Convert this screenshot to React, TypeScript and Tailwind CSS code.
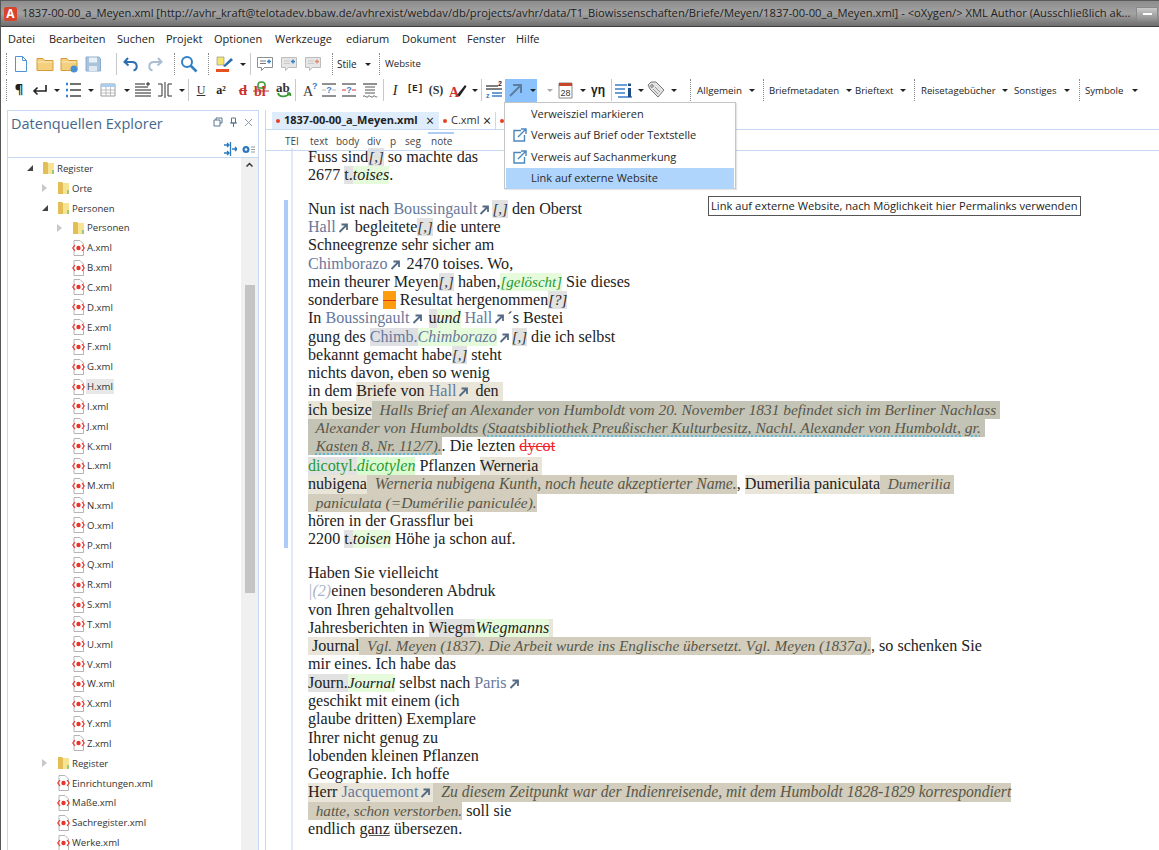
import React from "react";

const Grip = () => <div className="w-px h-[22px] shrink-0 border-l border-dotted border-[#8a8a8a]" />;
const Sep = () => <div className="w-px h-[22px] shrink-0 bg-[#c9c9c9]" />;
const Drop = () => (
  <div className="w-[9px] shrink-0 flex justify-center">
    <div className="w-0 h-0 border-x-[3px] border-x-transparent border-t-[3px] border-t-[#222]" />
  </div>
);

const Cell = ({ children, className }: { children: React.ReactNode; className?: string }) => (
  <div className={`w-6 h-6 flex items-center justify-center shrink-0 whitespace-nowrap ${className || ""}`}>{children}</div>
);

const Svg = ({ children }: { children: React.ReactNode }) => (
  <svg width="18" height="18" viewBox="0 0 18 18" fill="none">
    {children}
  </svg>
);

const NewDoc = () => (
  <Svg>
    <path d="M3.5 1.5h7l4 4v11h-11z" fill="#fff" stroke="#4f93d2" />
    <path d="M10.5 1.5v4h4" stroke="#4f93d2" />
  </Svg>
);
const FolderIcon = ({ net }: { net?: boolean }) => (
  <Svg>
    <path d="M1 3.5h6l1.5 2H17v10H1z" fill="#f3cf7e" stroke="#d79c38" />
    <path d="M1.5 7h15" stroke="#fbe9bd" />
    {net && <circle cx="14" cy="14" r="3.5" fill="#4a8fd0" />}
  </Svg>
);
const SaveIcon = () => (
  <Svg>
    <path d="M2 2h13l1.500 1.500V16H2z" fill="#a9c3dd" stroke="#8badce" />
    <path d="M5 2.500h8v5H5z" fill="#e9f0f7" />
    <path d="M5 11h8v5H5z" fill="#dfe8f1" />
  </Svg>
);
const Undo = ({ off }: { off?: boolean }) => (
  <Svg>
    <path d="M6 3 2.500 7 6.500 10.500M3 7h7c6 0 6 7.500 1.500 8.500" stroke={off ? "#a9bed3" : "#2f6fb0"} strokeWidth="2" />
  </Svg>
);
const Redo = () => (
  <div className="-scale-x-100">
    <Undo off />
  </div>
);
const Search = () => (
  <Svg>
    <circle cx="7" cy="7" r="5" stroke="#2f80c4" strokeWidth="2" />
    <path d="m10.500 10.500 6 6" stroke="#2f80c4" strokeWidth="2.600" />
  </Svg>
);
const Highlight = () => (
  <Svg>
    <path d="M1 2h7v8H1z" fill="#f5e56b" stroke="#888" strokeWidth=".6" />
    <path d="m7 11 8-8 2 2-8 7z" fill="#2c6db0" />
    <path d="M0 14h13v3H0z" fill="#e8501f" />
  </Svg>
);
const Comment = ({ off, mark }: { off?: boolean; mark?: string }) => (
  <Svg>
    <path d="M1.500 2.500h15v10h-8l-3 3v-3h-4z" fill={off ? "#e6e6e6" : "#fff"} stroke={off ? "#bdbdbd" : "#8a8f94"} />
    <path d="M4 6h6M4 8.500h6" stroke={off ? "#c8c8c8" : "#777"} />
    <path d="M11 6.500h4M13 4.500v4" stroke={mark || "#2f80c4"} strokeWidth="1.400" />
  </Svg>
);
const Lines = ({ color = "#444", dots }: { color?: string; dots?: boolean }) => (
  <Svg>
    {dots && <path d="M2 3h2M2 9h2M2 15h2" stroke="#2f80e0" strokeWidth="2.500" />}
    <path d="M6 3h11M6 9h11M6 15h11" stroke={color} strokeWidth="1.400" />
  </Svg>
);
const Enter = () => (
  <Svg>
    <path d="M15 4v6H3M6.500 6.500 3 10l3.500 3.500" stroke="#222" strokeWidth="1.600" />
  </Svg>
);
const TableIcon = () => (
  <Svg>
    <path d="M2 3h14v12H2z" fill="#fff" stroke="#9a9a9a" />
    <path d="M2 3h14v3H2z" fill="#a8cdf0" />
    <path d="M2 9h14M2 12h14M7 6v9M11.500 6v9" stroke="#bbb" />
  </Svg>
);
const AlignIcon = () => (
  <Svg>
    <path d="M1 3h10M1 6h13M1 9h16M1 12h16M1 15h16" stroke="#222" />
    <path d="M14 1v4M12 3h4" stroke="#222" />
  </Svg>
);
const SplitIcon = () => (
  <Svg>
    <path d="M2 3h4v12H2M16 3h-4v12h4M9 1v16" stroke="#333" />
  </Svg>
);
const Rule = ({ red, wavy }: { red?: boolean; wavy?: boolean }) => (
  <Svg>
    <path d="M2 3h14" stroke="#222" />
    {!wavy && <path d="M2 9h4M12 9h4" stroke={red ? "#d33" : "#bbb"} />}
    {wavy ? (
      <path d="M4 6h10M4 9h10M4 12h10M2 15.500c2-2 3 2 5 0s3 2 5 0 3 2 4 0" stroke="#555" />
    ) : (
      <path d="M2 15h14" stroke="#222" />
    )}
    {!wavy && <text x="9" y="12" fontSize="9" textAnchor="middle" fontWeight="bold" fill="#3f7fc0" fontFamily="Liberation Sans">?</text>}
  </Svg>
);
const Spark = () => (
  <Svg>
    <text x="2" y="15" fontSize="14" fill="#333" fontFamily="Liberation Serif">A</text>
    <text x="11" y="8" fontSize="9" fontWeight="bold" fill="#3f7fc0" fontFamily="Liberation Sans">?</text>
  </Svg>
);
const AbIcon = () => (
  <Svg>
    <text x="1" y="11" fontSize="13" fontWeight="bold" fill="#333" fontFamily="Liberation Serif">ab</text>
    <path d="M3 12c1 4 8 5 12 0M15 12l.5 3M15 12l-3 .5" stroke="#3c9a35" strokeWidth="1.800" />
  </Svg>
);
const BlIcon = () => (
  <Svg>
    <path d="M5 4c0-4 7-4 7 0v3H5z" stroke="#3c9a35" strokeWidth="1.600" />
    <text x="1" y="15" fontSize="14" fontWeight="bold" fill="#c8332c" fontFamily="Liberation Serif">bl</text>
    <path d="M0 10h16" stroke="#c8332c" />
  </Svg>
);
const Pen = () => (
  <Svg>
    <text x="0" y="16" fontSize="14" fontWeight="bold" fill="#d0322a" fontFamily="Liberation Serif">A</text>
    <path d="m8 14 8-10 1.500 1.500-7 10z" fill="#222" />
  </Svg>
);
const NumList = () => (
  <Svg>
    <path d="M1 5h12M1 8h16" stroke="#555" strokeWidth="1.400" />
    <path d="M7 12h10M7 15h10" stroke="#3a7fc8" strokeWidth="1.400" />
    <text x="13" y="5" fontSize="7" fontWeight="bold" fill="#222" fontFamily="Liberation Sans">2</text>
    <text x="1" y="17" fontSize="7" fontWeight="bold" fill="#3a7fc8" fontFamily="Liberation Sans">z</text>
  </Svg>
);
const ArrowLink = () => (
  <Svg>
    <path d="m3 15 10-10M6 4h8v8" stroke="#5d7f9f" strokeWidth="2" />
  </Svg>
);
const Calendar = () => (
  <Svg>
    <path d="M2 2h13v15H2z" fill="#fff" stroke="#888" />
    <path d="M2 2h13v3H2z" fill="#c8472b" />
    <text x="8.500" y="15" fontSize="9" textAnchor="middle" fill="#333" fontFamily="Liberation Sans">28</text>
  </Svg>
);
const InfoLines = () => (
  <Svg>
    <path d="M0 4h12M0 8h10M0 12h10M3 16h14" stroke="#3a7fc8" strokeWidth="1.600" />
    <path d="M13 7h3v9h-3z" fill="#1d4f86" />
    <path d="M13 2.500h3V5h-3z" fill="#1d4f86" />
  </Svg>
);
const TagIcon = () => (
  <Svg>
    <path d="m1 4 3-3h5l8 8-6 7-8-8z" fill="#e3e3e3" stroke="#777" />
    <circle cx="5" cy="5" r="1.300" stroke="#777" />
    <path d="m6 8 5 5M8 6l5 5" stroke="#999" />
  </Svg>
);

const TopBar = () => (
  <div className="h-[27px] flex items-center bg-gradient-to-b from-[#8d8d8d] via-[#a3a3a3] to-[#6e6e6e] border-t border-t-[#5a5a5a] border-b border-b-[#3e3e3e]">
    <div className="ml-[3px] w-[13px] h-[14px] shrink-0 bg-[#d8432c] rounded-[2px] text-white text-[12px] font-bold leading-[14px] text-center">A</div>
    <div className="ml-[5px] flex-1 min-w-0 whitespace-nowrap overflow-hidden text-[11.2px] text-[#1d1d1d]">
      1837-00-00_a_Meyen.xml [http://avhr_kraft@telotadev.bbaw.de/avhrexist/webdav/db/projects/avhr/data/T1_Biowissenschaften/Briefe/Meyen/1837-00-00_a_Meyen.xml] - &lt;oXygen/&gt; XML Author (Ausschließlich ak...
    </div>
    <div className="ml-[6px] mr-[1px] w-[22px] h-[14px] shrink-0 border border-[#8a8a8a] bg-gradient-to-b from-[#c9c9c9] to-[#8f8f8f] flex items-center justify-center rounded-b-[2px]">
      <div className="w-[9px] h-[2px] bg-white" />
    </div>
  </div>
);

const menuItems: [string, string][] = [
  ["Datei", "w-[41px]"],
  ["Bearbeiten", "w-[68px]"],
  ["Suchen", "w-[49px]"],
  ["Projekt", "w-[48px]"],
  ["Optionen", "w-[61px]"],
  ["Werkzeuge", "w-[71px]"],
  ["ediarum", "w-[56px]"],
  ["Dokument", "w-[65px]"],
  ["Fenster", "w-[49px]"],
  ["Hilfe", "w-[40px]"],
];

const MenuBar = () => (
  <div className="h-[24px] pl-[7px] flex items-center text-[11px] text-[#222]">
    {menuItems.map(([label, w]) => (
      <div key={label} className={w}>
        {label}
      </div>
    ))}
  </div>
);

const ToolbarOne = () => (
  <div className="h-[26px] pl-[5px] flex items-center">
    <Grip />
    <div className="w-[2px]" />
    <Cell><NewDoc /></Cell>
    <Cell><FolderIcon /></Cell>
    <Cell><FolderIcon net /></Cell>
    <Cell><SaveIcon /></Cell>
    <div className="w-[11px]" />
    <Sep />
    <div className="w-[2px]" />
    <Cell><Undo /></Cell>
    <Cell><Redo /></Cell>
    <div className="w-[7px]" />
    <Grip />
    <div className="w-[2px]" />
    <Cell><Search /></Cell>
    <div className="w-[7px]" />
    <Grip />
    <div className="w-[4px]" />
    <Cell><Highlight /></Cell>
    <div className="w-px" />
    <Drop />
    <div className="w-[3px]" />
    <Sep />
    <div className="w-[2px]" />
    <Cell><Comment /></Cell>
    <Cell><Comment off /></Cell>
    <Cell><Comment off mark="#e08a70" /></Cell>
    <div className="w-[7px]" />
    <Grip />
    <div className="w-[4px]" />
    <div className="w-[26px] text-[10px] text-[#222]">Stile</div>
    <Drop />
    <div className="w-[7px]" />
    <Grip />
    <div className="w-[5px]" />
    <div className="text-[9.6px] text-[#222]">Website</div>
  </div>
);

const ToolbarTwo = () => (
  <div className="h-[26px] pl-[5px] flex items-center">
    <Grip />
    <Cell className="text-[13px] font-bold text-[#222]">¶</Cell>
    <Cell className="-ml-[3px]"><Enter /></Cell>
    <Drop />
    <Cell><Lines dots /></Cell>
    <div className="w-px" />
    <Drop />
    <div className="w-px" />
    <Cell><TableIcon /></Cell>
    <div className="w-[2px]" />
    <Drop />
    <Cell><AlignIcon /></Cell>
    <Cell className="-ml-[2px]"><SplitIcon /></Cell>
    <Drop />
    <div className="w-[2px]" />
    <Sep />
    <Cell className="font-['Liberation_Serif',serif] text-[12px] underline text-[#333]">U</Cell>
    <Cell className="-ml-[4px] font-['Liberation_Serif',serif] text-[12px] font-bold text-[#222]">a²</Cell>
    <Cell className="-ml-[2px] font-['Liberation_Serif',serif] text-[15px] font-bold text-[#c8332c] line-through">d</Cell>
    <Cell className="-ml-[5px]"><BlIcon /></Cell>
    <Cell className="-ml-[2px]"><AbIcon /></Cell>
    <div className="-ml-px"><Sep /></div>
    <div className="w-[2px]" />
    <Cell><Spark /></Cell>
    <Cell className="-ml-[5px]"><Rule /></Cell>
    <Cell className="-ml-[4px]"><Rule red /></Cell>
    <Cell className="-ml-[3px]"><Rule wavy /></Cell>
    <div className="w-px" />
    <Sep />
    <Cell className="-ml-px font-['Liberation_Serif',serif] italic text-[14px] text-[#222]">I</Cell>
    <Cell className="-ml-[4px] font-['Liberation_Mono',monospace] text-[9px] font-bold text-[#222]">[E]</Cell>
    <Cell className="-ml-[3px] font-['Liberation_Serif',serif] text-[12px] font-bold text-[#333]">(S)</Cell>
    <Cell className="-ml-[2px]"><Pen /></Cell>
    <Drop />
    <div className="w-[2px]" />
    <Sep />
    <Cell><NumList /></Cell>
    <div className="-ml-px w-[32px] h-[23px] shrink-0 flex items-center bg-[#8cc2fb]">
      <Cell className="-ml-[1px]"><ArrowLink /></Cell>
      <Drop />
    </div>
    <div className="w-[10px]" />
    <div className="w-0 h-0 border-x-[3px] border-x-transparent border-t-[3px] border-t-[#aaa]" />
    <div className="w-px" />
    <Cell><Calendar /></Cell>
    <Drop />
    <Cell className="-ml-px font-['Liberation_Sans',sans-serif] text-[12px] font-bold text-[#222]">γη</Cell>
    <div className="w-px" />
    <Sep />
    <Cell><InfoLines /></Cell>
    <Drop />
    <Cell className="-ml-px"><TagIcon /></Cell>
    <div className="w-px" />
    <Drop />
    <div className="w-[12px]" />
    <Grip />
    <div className="w-[6px]" />
    <div className="w-[50px] mt-[2px] text-[9.8px] text-[#222]">Allgemein</div>
    <Drop />
    <div className="w-[7px]" />
    <Grip />
    <div className="w-[5px]" />
    <div className="w-[75px] mt-[2px] text-[9.6px] text-[#222] whitespace-nowrap">Briefmetadaten</div>
    <Drop />
    <div className="w-[2px]" />
    <div className="w-[43px] mt-[2px] text-[9.6px] text-[#222]">Brieftext</div>
    <Drop />
    <div className="w-[7px]" />
    <Grip />
    <div className="w-[6px]" />
    <div className="w-[79px] mt-[2px] text-[9.6px] text-[#222] whitespace-nowrap">Reisetagebücher</div>
    <Drop />
    <div className="w-[5px]" />
    <div className="w-[48px] mt-[2px] text-[9.6px] text-[#222]">Sonstiges</div>
    <Drop />
    <div className="w-[8px]" />
    <Grip />
    <div className="w-[5px]" />
    <div className="w-[45px] mt-[2px] text-[9.6px] text-[#222]">Symbole</div>
    <Drop />
  </div>
);

const TreeFolder = () => (
  <svg width="13" height="14" viewBox="0 0 13 14" className="shrink-0">
    <path d="M1 1h4l1 1v11H1z" fill="#e3bd55" />
    <path d="M6 2h6v11H6z" fill="#f6e393" />
    <path d="M10 9h2v4h-2z" fill="#9cc97f" />
  </svg>
);
const XmlFile = () => (
  <svg width="13" height="16" viewBox="0 0 13 16" className="shrink-0">
    <path d="M2 .5h6l3.500 3.500v11.500H2z" fill="#fff" stroke="#b5b5b5" />
    <path d="M3 5 .8 8 3 11M10 5l2.200 3L10 11" stroke="#e8342b" fill="none" strokeWidth="1.200" />
    <circle cx="6.500" cy="8" r="2.200" fill="#e8342b" />
  </svg>
);
const Open = () => <div className="w-0 h-0 border-l-[6px] border-l-transparent border-b-[6px] border-b-[#444]" />;
const Closed = () => <div className="w-0 h-0 border-y-[4px] border-y-transparent border-l-[5px] border-l-[#c8c8c8]" />;

type Row = { label: string; depth: "a" | "b" | "c"; kind: "open" | "closed" | "file"; selected?: boolean };

const letters = "ABCDEFGHIJKLMNOPQRSTUVWXYZ".split("");
const rows: Row[] = [
  { label: "Register", depth: "a", kind: "open" },
  { label: "Orte", depth: "b", kind: "closed" },
  { label: "Personen", depth: "b", kind: "open" },
  { label: "Personen", depth: "c", kind: "closed" },
  ...letters.map((l): Row => ({ label: `${l}.xml`, depth: "c", kind: "file", selected: l === "H" })),
  { label: "Register", depth: "b", kind: "closed" },
  { label: "Einrichtungen.xml", depth: "b", kind: "file" },
  { label: "Maße.xml", depth: "b", kind: "file" },
  { label: "Sachregister.xml", depth: "b", kind: "file" },
  { label: "Werke.xml", depth: "b", kind: "file" },
];
const depthClass = { a: "pl-[19px]", b: "pl-[34px]", c: "pl-[49px]" };

const Explorer = () => (
  <div className="w-[252px] ml-[6px] shrink-0 h-full border border-[#c5daf0] flex flex-col overflow-hidden">
    <div className="h-[47px] shrink-0 border-b border-[#c5daf0] relative">
      <div className="pl-[3px] pt-[1px] text-[14.5px] leading-[24px] text-[#44688d]">Datenquellen Explorer</div>
      <div className="absolute right-[5px] top-[6px] flex gap-[6px] items-center">
        <svg width="10" height="10" viewBox="0 0 10 10" fill="none" stroke="#5b7590"><path d="M3 3V1h6v5H7M1 3h6v6H1z" /></svg>
        <svg width="9" height="10" viewBox="0 0 9 10" fill="none" stroke="#5b7590"><path d="M2.500 1h4v5h-4zM1 6h7M4.500 6v4" /></svg>
        <svg width="9" height="9" viewBox="0 0 9 9" stroke="#8a9aaa"><path d="m1 1 7 7M8 1 1 8" /></svg>
      </div>
      <div className="absolute right-[3px] top-[31px] flex gap-[5px] items-center">
        <svg width="13" height="14" viewBox="0 0 13 14" fill="none" stroke="#2d79bd" strokeWidth="1.300"><path d="M0 3h5M3 1l2 2-2 2M8 7h5M11 5l2 2-2 2M0 11h5M3 9l2 2-2 2M6.500 0v14" /></svg>
        <svg width="13" height="9" viewBox="0 0 13 9"><circle cx="4" cy="4.500" r="3.500" fill="#2d79bd" /><circle cx="4" cy="4.500" r="1.200" fill="#fff" /><path d="M9 2h4M9 4.500h4M9 7h4" stroke="#999" /></svg>
      </div>
    </div>
    <div className="flex-1 flex min-h-0">
      <div className="flex-1 min-w-0 pt-[0.5px]">
        {rows.map((r, i) => (
          <div key={i} className={`h-[19.84px] flex items-center text-[9.6px] text-[#333] ${depthClass[r.depth]}`}>
            <div className="w-[15px] flex items-center">
              {r.kind === "open" && <Open />}
              {r.kind === "closed" && <Closed />}
            </div>
            {r.kind === "file" ? <XmlFile /> : <TreeFolder />}
            <div className={`ml-[1px] px-[1px] leading-[15px] whitespace-nowrap ${r.selected ? "bg-[#e8e8e8]" : ""}`}>{r.label}</div>
          </div>
        ))}
      </div>
      <div className="w-[17px] shrink-0 bg-[#f0f0f0] flex flex-col items-center pt-[4px]">
        <svg width="7" height="5" viewBox="0 0 7 5" fill="none" stroke="#333" strokeWidth="1.500"><path d="m.5 4.500 3-3 3 3" /></svg>
        <div className="mt-[118px] w-[10px] h-[308px] bg-[#c4c4c4]" />
      </div>
    </div>
  </div>
);

const Tabs = () => (
  <div className="h-[20px] shrink-0 pt-[2px] flex items-stretch pl-[6px] border-b border-[#c5daf0]">
    <div className="w-[167px] bg-[#deecfb] flex items-center pl-[4px] text-[11px] font-bold text-[#222] whitespace-nowrap">
      <span className="w-[4px] h-[4px] rounded-full bg-[#e8401c] mr-[4px]" />
      1837-00-00_a_Meyen.xml
      <span className="ml-auto mr-[5px] text-[#222] font-normal text-[14px] leading-[14px]">×</span>
    </div>
    <div className="w-[57px] flex items-center pl-[4px] text-[11px] text-[#333] border-r border-[#c5daf0]">
      <span className="w-[4px] h-[4px] rounded-full bg-[#e8401c] mr-[4px]" />
      C.xml
      <span className="ml-auto mr-[4px] text-[14px] leading-[14px] text-[#222]">×</span>
    </div>
    <div className="flex items-center pl-[4px]">
      <span className="w-[4px] h-[4px] rounded-full bg-[#e8401c]" />
    </div>
  </div>
);

const crumbs: [string, string][] = [
  ["TEI", "w-[25px] border-transparent"],
  ["text", "w-[26px] border-transparent"],
  ["body", "w-[31px] border-transparent"],
  ["div", "w-[23px] border-transparent"],
  ["p", "w-[15px] border-transparent"],
  ["seg", "w-[26px] border-transparent"],
  ["note", "w-[26px] border-[#aecdf5] -ml-[3px] pl-[3px]"],
];

const Breadcrumb = () => (
  <div className="h-[21px] shrink-0 pt-[2px] pl-[19px] flex items-stretch text-[10px] text-[#444] border-b border-[#c5daf0] relative z-10">
    {crumbs.map(([label, w]) => (
      <div key={label} className={`${w} border-t-[2px] leading-[15px]`}>{label}</div>
    ))}
  </div>
);

const Arr = () => (
  <svg width="11" height="10" viewBox="0 0 11 10" fill="none" className="inline-block mx-[2px] align-[-1px]">
    <path d="m1.500 9 7-7M3.500 1.500h5.500V7" stroke="#556a82" strokeWidth="1.800" />
  </svg>
);

const S = ({ c, children }: { c: string; children?: React.ReactNode }) => (
  <span className={`inline-block h-[18.28px] align-top ${c}`}>{children}</span>
);
const Gray = ({ children }: { children: React.ReactNode }) => <S c="bg-[#e2e2e2]">{children}</S>;
const Ins = ({ children }: { children: React.ReactNode }) => <S c="bg-[#e6fbdc] italic text-[16px]">{children}</S>;
const Comma = () => <S c="bg-[#e2e2e2] italic text-[15px] text-[#333]">[,]</S>;
const A = ({ children }: { children: React.ReactNode }) => <span className="text-[#66799c]">{children}</span>;
const Beige = ({ children }: { children: React.ReactNode }) => <S c="bg-[#e9e5d9]">{children}</S>;
const Note = ({ children, c }: { children: React.ReactNode; c: string }) => (
  <S c={`italic text-[#59574a] ${c}`}>{children}</S>
);
const Dots = ({ children }: { children: React.ReactNode }) => (
  <span className="underline decoration-dotted decoration-[#37b6e3] underline-offset-[3px]">{children}</span>
);

const Line = ({ children, className }: { children: React.ReactNode; className?: string }) => (
  <div className={`h-[18.28px] leading-[18.28px] whitespace-pre ${className || ""}`}>{children}</div>
);

const Block = ({ bar, children }: { bar?: boolean; children: React.ReactNode }) => (
  <div className="flex">
    <div className={`w-[4px] shrink-0 mb-[15.7px] ${bar ? "bg-[#aecbf7]" : ""}`} />
    <div className="ml-[3px] border-l-[2px] border-[#e1ebf8] pl-[15px] pb-[15.7px]">{children}</div>
  </div>
);

const Editor = () => (
  <div className="flex-1 min-h-0 -mt-[3.5px] overflow-hidden pl-[18px] font-['Liberation_Serif',serif] text-[16.1px] text-[#222]">
    <Block>
      <Line>Fuss sind<Comma /> so machte das</Line>
      <Line>2677 <Gray>t.</Gray><Ins>toises</Ins>.</Line>
    </Block>
    <Block bar>
      <Line>Nun ist nach <A>Boussingault</A><Arr /><Comma /> den Oberst</Line>
      <Line><A>Hall</A><Arr /> begleitete<Comma /> die untere</Line>
      <Line>Schneegrenze sehr sicher am</Line>
      <Line><A>Chimborazo</A><Arr /> 2470 toises. Wo,</Line>
      <Line>mein theurer Meyen<Comma /> haben,<S c="bg-[#e6fbdc] italic text-[15px] text-[#1f9a33]">[gelöscht]</S> Sie dieses</Line>
      <Line>sonderbare <S c="bg-[#fb9d0e] w-[13px]"><span className="block h-px mt-[9px] bg-[#e0301e]" /></S> Resultat hergenommen<S c="bg-[#e2e2e2] italic text-[15px]">[?]</S></Line>
      <Line>In <A>Boussingault</A><Arr /> <Gray>u</Gray><Ins>und</Ins> <A>Hall</A><Arr />´s Bestei</Line>
      <Line>gung des <S c="bg-[#dfe0e4] text-[#66799c]">Chimb.</S><S c="bg-[#e6fbdc] italic text-[16px] text-[#66799c]">Chimborazo</S><Arr /><Comma /> die ich selbst</Line>
      <Line>bekannt gemacht habe<Comma /> steht</Line>
      <Line>nichts davon, eben so wenig</Line>
      <Line>in dem <Beige>Briefe von <A>Hall</A><Arr /> den </Beige></Line>
      <Line><Beige>ich besize</Beige><Note c="bg-[#c4c4b6] text-[15.4px]">  Halls Brief an Alexander von Humboldt vom 20. November 1831 befindet sich im Berliner Nachlass </Note></Line>
      <Line><Note c="bg-[#c4c4b6] text-[15.6px]">  Alexander von Humboldts (<Dots>Staatsbibliothek Preußischer Kulturbesitz, Nachl. Alexander von Humboldt, gr.</Dots> </Note></Line>
      <Line><Note c="bg-[#c4c4b6] text-[15.25px]">  <Dots>Kasten 8, Nr. 112/7)</Dots>.</Note>. Die lezten <span className="text-[#f0222a] line-through">dycot</span></Line>
      <Line className="mt-[1.700px]"><S c="bg-[#e2e2e2] text-[#1f9a33]">dicotyl.</S><S c="bg-[#dcfad0] italic text-[16px] text-[#1f9a33]">dicotylen</S> Pflanzen <Beige>Werneria </Beige></Line>
      <Line><Beige>nubigena</Beige><Note c="bg-[#d2cdbc] text-[15.7px]">  Werneria nubigena Kunth, noch heute akzeptierter Name.</Note>, <Beige>Dumerilia paniculata</Beige><Note c="bg-[#d2cdbc] text-[15.25px]">  Dumerilia </Note></Line>
      <Line><Note c="bg-[#d2cdbc] text-[15.45px]">  paniculata (=Dumérilie paniculée).</Note></Line>
      <Line>hören in der Grassflur bei</Line>
      <Line>2200 <Gray>t.</Gray><Ins>toisen</Ins> Höhe ja schon auf.</Line>
    </Block>
    <Block>
      <Line>Haben Sie vielleicht</Line>
      <Line><span className="italic text-[#a9b4c4]">|(2)</span>einen besonderen Abdruk</Line>
      <Line>von Ihren gehaltvollen</Line>
      <Line>Jahresberichten in <Gray>Wiegm</Gray><Ins>Wiegmanns</Ins><Beige> </Beige></Line>
      <Line><Beige> Journal</Beige><Note c="bg-[#d2cdbc] text-[15.25px]">  Vgl. Meyen (1837). Die Arbeit wurde ins Englische übersetzt. Vgl. Meyen (1837a).</Note>, so schenken Sie</Line>
      <Line>mir eines. Ich habe das</Line>
      <Line><Gray>Journ.</Gray><S c="bg-[#e6fbdc] italic text-[15.25px]">Journal</S> selbst nach <A>Paris</A><Arr /></Line>
      <Line>geschikt mit einem (ich</Line>
      <Line>glaube dritten) Exemplare</Line>
      <Line>Ihrer nicht genug zu</Line>
      <Line>lobenden kleinen Pflanzen</Line>
      <Line>Geographie. Ich hoffe</Line>
      <Line><Beige>Herr <A>Jacquemont</A><Arr /></Beige><Note c="bg-[#d2cdbc] text-[15.7px]">  Zu diesem Zeitpunkt war der Indienreisende, mit dem Humboldt 1828-1829 korrespondiert</Note></Line>
      <Line><Note c="bg-[#d2cdbc] text-[15.25px]">  hatte, schon verstorben.</Note> soll sie</Line>
      <Line>endlich <span className="underline decoration-[#555]">ganz</span> übersezen.</Line>
    </Block>
  </div>
);

const ExtLink = () => (
  <svg width="14" height="14" viewBox="0 0 14 14" fill="none" stroke="#4d86bd" strokeWidth="1.400">
    <path d="M8 2.500H1v10.500h10.500V7M5 9l7.500-7.500M8 1h5v5" />
  </svg>
);

const MenuItem = ({ icon, active, children }: { icon?: boolean; active?: boolean; children: React.ReactNode }) => (
  <div className={`h-[21.500px] flex items-center text-[11px] text-[#2a2a2a] ${active ? "bg-[#b0d5fd]" : ""}`}>
    <div className="w-[25px] flex justify-end pr-[4px]">{icon && <ExtLink />}</div>
    {children}
  </div>
);

const Dropdown = () => (
  <div className="absolute left-[503px] top-[102px] w-[232px] h-[87px] bg-white border border-[#c5c5c5] px-[1px] z-20 shadow-[1px_1px_1px_rgba(0,0,0,0.1)]">
    <MenuItem>Verweisziel markieren</MenuItem>
    <MenuItem icon>Verweis auf Brief oder Textstelle</MenuItem>
    <MenuItem icon>Verweis auf Sachanmerkung</MenuItem>
    <MenuItem active>Link auf externe Website</MenuItem>
  </div>
);

const Tooltip = () => (
  <div className="absolute left-[707px] top-[196px] h-[20px] px-[2px] leading-[18px] bg-white border border-[#555] text-[11.15px] text-[#222] whitespace-nowrap z-20">
    Link auf externe Website, nach Möglichkeit hier Permalinks verwenden
  </div>
);

export default function App() {
  return (
    <div className="w-[1159px] h-[850px] overflow-hidden bg-white relative font-['Open_Sans',sans-serif] border-l-[1px] border-[#555]">
      <TopBar />
      <MenuBar />
      <ToolbarOne />
      <ToolbarTwo />
      <div className="h-[747px] mt-[7px] flex">
        <Explorer />
        <div className="ml-[6px] flex-1 min-w-0 border-l border-[#c5daf0] flex flex-col">
          <Tabs />
          <Breadcrumb />
          <Editor />
        </div>
      </div>
      <Dropdown />
      <Tooltip />
    </div>
  );
}
